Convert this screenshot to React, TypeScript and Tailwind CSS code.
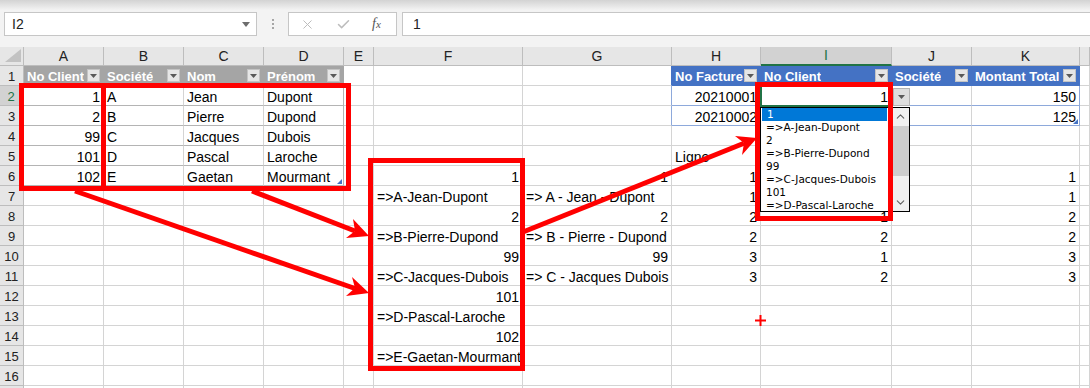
import { X, Check, ChevronUp, ChevronDown } from "lucide-react";

const COLS = ["A", "B", "C", "D", "E", "F", "G", "H", "I", "J", "K", "L"];
const T1 = ["A", "B", "C", "D"];
const T2 = ["H", "I", "J", "K"];

const cells: Record<number, Record<string, string>> = {
  1: { A: "No Client", B: "Société", C: "Nom", D: "Prénom", H: "No Facture", I: "No Client", J: "Société", K: "Montant Total" },
  2: { A: "1", B: "A", C: "Jean", D: "Dupont", H: "20210001", I: "1", K: "150" },
  3: { A: "2", B: "B", C: "Pierre", D: "Dupond", H: "20210002", K: "125" },
  4: { A: "99", B: "C", C: "Jacques", D: "Dubois" },
  5: { A: "101", B: "D", C: "Pascal", D: "Laroche", H: "Ligne" },
  6: { A: "102", B: "E", C: "Gaetan", D: "Mourmant", F: "1", G: "1", H: "1", I: "1", K: "1" },
  7: { F: "=>A-Jean-Dupont", G: "=> A - Jean - Dupont", H: "1", I: "2", K: "1" },
  8: { F: "2", G: "2", H: "2", I: "1", K: "2" },
  9: { F: "=>B-Pierre-Dupond", G: "=> B - Pierre - Dupond", H: "2", I: "2", K: "2" },
  10: { F: "99", G: "99", H: "3", I: "1", K: "3" },
  11: { F: "=>C-Jacques-Dubois", G: "=> C - Jacques Dubois", H: "3", I: "2", K: "3" },
  12: { F: "101" },
  13: { F: "=>D-Pascal-Laroche" },
  14: { F: "102" },
  15: { F: "=>E-Gaetan-Mourmant" },
};

const listItems = [
  "1",
  "=>A-Jean-Dupont",
  "2",
  "=>B-Pierre-Dupond",
  "99",
  "=>C-Jacques-Dubois",
  "101",
  "=>D-Pascal-Laroche",
];

function FilterButton() {
  return (
    <span className="ml-auto mb-[3px] w-[13px] h-[13px] shrink-0 bg-[#e6e6e6] border border-[#c4c4c4] flex items-center justify-center">
      <svg width="7" height="4" viewBox="0 0 7 4">
        <path d="M0 0h7L3.5 4z" fill="#595959" />
      </svg>
    </span>
  );
}

function ResizeHandle() {
  return (
    <svg className="absolute right-[1px] bottom-[1px]" width="5" height="5" viewBox="0 0 5 5">
      <path d="M5 0V5H0z" fill="#4472c4" />
    </svg>
  );
}

function Cell({ row, col }: { row: number; col: string }) {
  const v = cells[row]?.[col] ?? "";
  const num = /^\d+$/.test(v);
  const t1Head = row === 1 && T1.includes(col);
  const t2Head = row === 1 && T2.includes(col);
  const t1Body = row >= 2 && row <= 6 && T1.includes(col);
  const t2Body = row >= 2 && row <= 3 && T2.includes(col);

  if (t1Head || t2Head) {
    return (
      <div
        className={
          "h-[20px] flex items-end px-[3px] leading-[16px] whitespace-nowrap overflow-hidden border-r border-b text-white font-bold text-[13px] " +
          (t1Head ? "bg-[#a5a5a5] border-[#a5a5a5]" : "bg-[#4472c4] border-[#4472c4]")
        }
      >
        <span className="min-w-0 overflow-hidden">{v}</span>
        <FilterButton />
      </div>
    );
  }

  return (
    <div
      className={
        "relative h-[20px] flex items-end px-[3px] leading-[16px] whitespace-nowrap overflow-hidden border-r border-b border-[#d4d4d4] text-[14px] text-black " +
        (num ? "justify-end " : "") +
        (t1Body ? "border-b-[#b4b4b4] " : "") +
        (t1Body && col === "D" ? "border-r-[#b4b4b4] " : "") +
        (t2Body ? "border-b-[#8ea9db] " : "") +
        (t2Body && col === "K" ? "border-r-[#8ea9db] " : "") +
        (col === "G" && row >= 2 && row <= 3 ? "border-r-[#8ea9db] " : "") +
        (col === "G" && row === 1 ? "border-r-[#4472c4] " : "")
      }
    >
      {v}
      {((row === 6 && col === "D") || (row === 3 && col === "K")) && <ResizeHandle />}
    </div>
  );
}

function FormulaBar() {
  return (
    <div className="h-[47px] bg-[#f3f3f3] flex flex-col">
      <div className="h-[10px] bg-linear-to-b from-[#d3d3d3] to-[#f3f3f3]" />
      <div className="mt-[2px] h-[24px] flex items-stretch">
        <div className="ml-[4px] w-[253px] bg-white border border-[#c6c6c6] flex items-center pl-[7px] pr-[6px] text-[14px] text-[#222]">
          <span>I2</span>
          <svg className="ml-auto" width="8" height="5" viewBox="0 0 8 5">
            <path d="M0 0h8L4 5z" fill="#6d6d6d" />
          </svg>
        </div>
        <div className="w-[31px] flex flex-col items-center justify-center gap-[2px]">
          <span className="w-[2px] h-[2px] bg-[#a6a6a6]" />
          <span className="w-[2px] h-[2px] bg-[#a6a6a6]" />
          <span className="w-[2px] h-[2px] bg-[#a6a6a6]" />
        </div>
        <div className="w-[109px] bg-white border border-[#c6c6c6] flex items-center">
          <X className="ml-[11px]" size={15} strokeWidth={1.6} color="#bdbdbd" />
          <Check className="ml-[21px]" size={15} strokeWidth={2.4} color="#bdbdbd" />
          <span className="ml-[21px] font-['Liberation_Serif',serif] italic text-[14px] text-[#555] leading-none">
            f<span className="text-[11px]">x</span>
          </span>
        </div>
        <div className="ml-[5px] flex-1 bg-white border-y border-l border-[#c6c6c6] flex items-center pl-[10px] text-[14px] text-[#222]">
          1
        </div>
      </div>
    </div>
  );
}

function Sheet() {
  const rows = Array.from({ length: 17 }, (_, i) => i + 1);
  return (
    <div className="grid grid-cols-[24px_80px_80px_80px_80px_30px_149px_149px_89px_131px_80px_108px_10px]">
      <div className="relative h-[19px] bg-[#e6e6e6] border-r border-b border-[#bdbdbd]">
        <svg className="absolute right-[2px] bottom-[3px]" width="16" height="13" viewBox="0 0 16 13">
          <path d="M16 0V13H0z" fill="#c2c2c2" />
        </svg>
      </div>
      {COLS.map((c) => (
        <div
          key={c}
          className={
            "h-[19px] flex items-center justify-center border-r border-b text-[14px] " +
            (c === "I"
              ? "bg-[#d2d2d2] border-[#bdbdbd] border-b-2 border-b-[#217346] text-[#217346]"
              : "bg-[#e6e6e6] border-[#bdbdbd] text-[#222]")
          }
        >
          {c === "L" ? "" : c}
        </div>
      ))}
      {rows.map((r) => (
        <div key={r} className="contents">
          <div
            className={
              "h-[20px] flex items-end justify-center leading-[16px] border-b text-[13px] " +
              (r === 2
                ? "bg-[#d2d2d2] border-[#bdbdbd] border-r-2 border-r-[#217346] text-[#217346]"
                : "bg-[#e6e6e6] border-r border-[#bdbdbd] text-[#222]")
            }
          >
            {r < 17 ? r : ""}
          </div>
          {COLS.map((c) => (
            <Cell key={c} row={r} col={c} />
          ))}
        </div>
      ))}
    </div>
  );
}

function DropdownList() {
  return (
    <div className="absolute left-[760px] top-[107px] w-[150px] h-[105px] bg-white border border-black flex">
      <div className="flex-1 flex flex-col font-['DejaVu_Sans',sans-serif] text-[10.5px] leading-[13px] text-black">
        {listItems.map((it, i) => (
          <div
            key={i}
            className={
              "h-[13px] pl-[5px] whitespace-nowrap " +
              (i === 0 ? "bg-[#0078d7] text-white ml-[1px] mr-[5px] pl-[4px]" : "")
            }
          >
            {it}
          </div>
        ))}
      </div>
      <div className="w-[17px] bg-[#f0f0f0] flex flex-col">
        <div className="h-[17px] flex items-center justify-center">
          <ChevronUp size={13} strokeWidth={2} color="#606060" />
        </div>
        <div className="mt-[1px] h-[50px] bg-[#cdcdcd]" />
        <div className="mt-auto h-[17px] flex items-center justify-center">
          <ChevronDown size={13} strokeWidth={2} color="#606060" />
        </div>
      </div>
    </div>
  );
}

function Annotations() {
  return (
    <svg className="absolute left-0 top-0 pointer-events-none" width="1090" height="388" viewBox="0 0 1090 388">
      <g stroke="#ff0000" strokeWidth="5" fill="none">
        <line x1="75" y1="191" x2="355" y2="288.5" />
        <line x1="252" y1="191" x2="355" y2="231" />
        <line x1="523" y1="232" x2="744" y2="143.2" />
      </g>
      <g fill="#ff0000">
        <polygon points="369,293 346,296 355,288 352,277" />
        <polygon points="369,236 346,238 355,231 353,219" />
        <polygon points="757,138 742,155 744,143 735,136" />
      </g>
      <path d="M755 320.5h11M760.5 315v11" stroke="#ff0000" strokeWidth="2" />
    </svg>
  );
}

export default function App() {
  return (
    <div className="relative w-[1090px] h-[388px] overflow-hidden bg-white font-['Liberation_Sans',Arial,sans-serif]">
      <FormulaBar />
      <Sheet />
      {/* selected cell I2 */}
      <div className="absolute left-[760px] top-[85px] w-[133px] h-[22px] border-2 border-[#217346]" />
      {/* validation dropdown button */}
      <div className="absolute left-[893px] top-[88px] w-[17px] h-[18px] bg-[#dedede] border border-[#b3b3b3] flex items-center justify-center">
        <svg width="7" height="4" viewBox="0 0 7 4">
          <path d="M0 0h7L3.5 4z" fill="#595959" />
        </svg>
      </div>
      <DropdownList />
      {/* red boxes */}
      <div className="absolute left-[19px] top-[83px] w-[87px] h-[108px] border-[5px] border-[#ff0000]" />
      <div className="absolute left-[101px] top-[83px] w-[250px] h-[108px] border-[5px] border-[#ff0000]" />
      <div className="absolute left-[368px] top-[158px] w-[157px] h-[213px] border-[5px] border-[#ff0000]" />
      <div className="absolute left-[755px] top-[82px] w-[138px] h-[139px] border-[5px] border-[#ff0000]" />
      <Annotations />
    </div>
  );
}
